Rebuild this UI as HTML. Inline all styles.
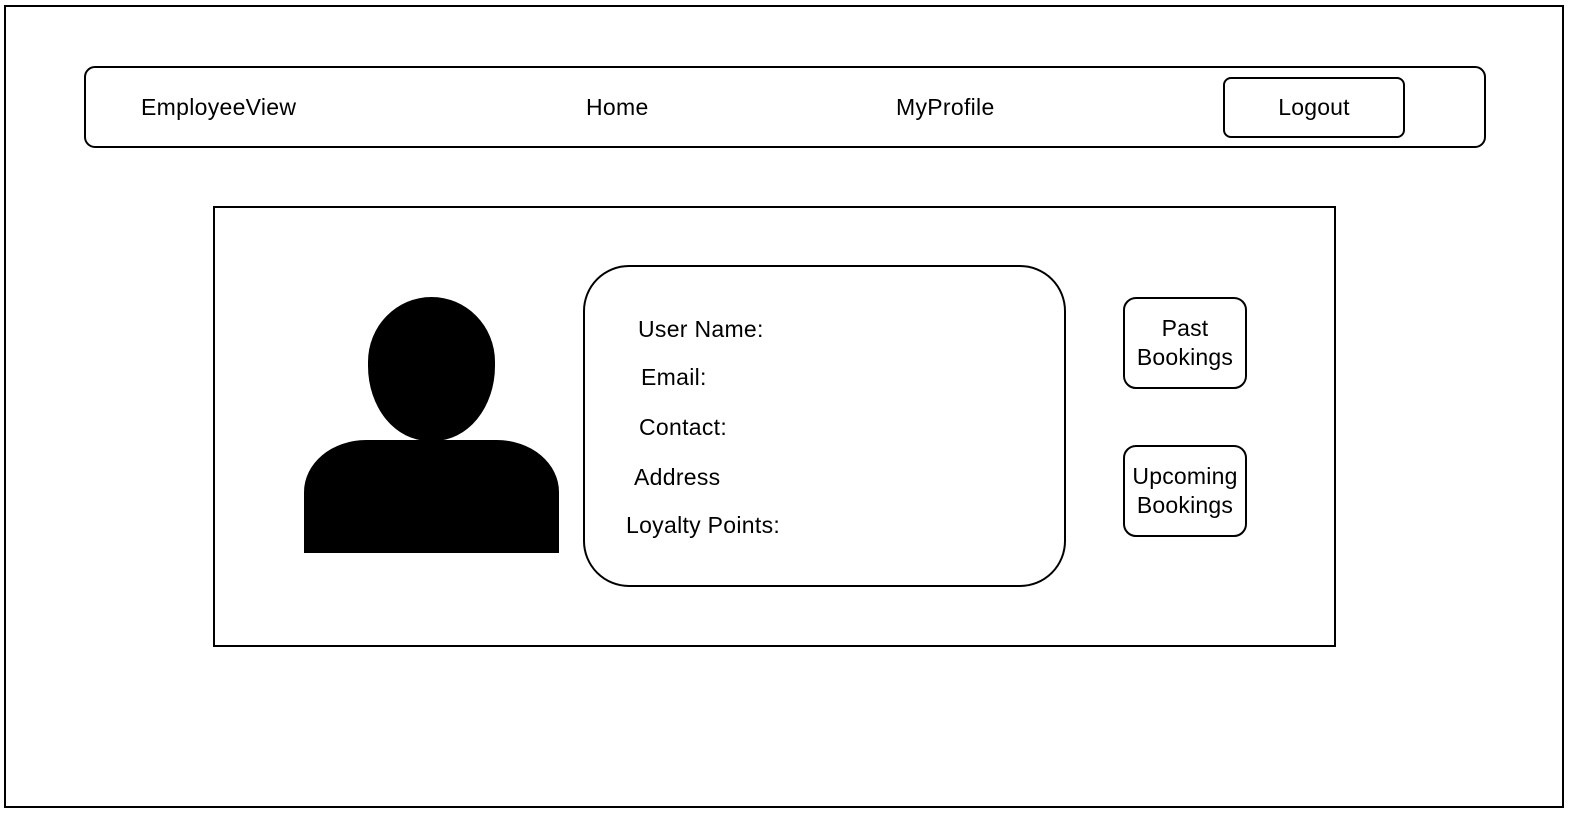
<!DOCTYPE html>
<html><head><meta charset="utf-8"><style>
*{margin:0;padding:0;box-sizing:border-box}
body{width:1570px;height:814px;background:#fff;position:relative;overflow:hidden;font-family:"Liberation Sans",Arial,sans-serif;color:#000}
.a{position:absolute}
.b{position:absolute;border:2px solid #000}
.t{position:absolute;font-size:23px;letter-spacing:0.3px;line-height:26px;white-space:nowrap}
.c{display:flex;align-items:center;justify-content:center;text-align:center;font-size:23px;letter-spacing:0.2px;line-height:29px}
</style></head><body>
<div class="b" style="left:4px;top:5px;width:1560px;height:803px"></div>
<div class="b" style="left:84px;top:66px;width:1402px;height:82px;border-radius:11px"></div>
<div class="t" style="left:141px;top:94px">EmployeeView</div>
<div class="t" style="left:586px;top:94px">Home</div>
<div class="t" style="left:896px;top:94px">MyProfile</div>
<div class="b c" style="left:1223px;top:77px;width:182px;height:61px;border-radius:8px">Logout</div>
<div class="b" style="left:213px;top:206px;width:1123px;height:441px"></div>
<div class="a" style="left:368px;top:297px;width:127px;height:144px;background:#000;border-radius:50% 50% 48% 48%/45% 45% 52% 52%"></div>
<div class="a" style="left:304px;top:440px;width:255px;height:113px;background:#000;border-radius:62px 62px 0 0/52px 52px 0 0"></div>
<div class="b" style="left:583px;top:265px;width:483px;height:322px;border-radius:46px"></div>
<div class="t" style="left:638px;top:316px">User Name:</div>
<div class="t" style="left:641px;top:364px">Email:</div>
<div class="t" style="left:639px;top:414px">Contact:</div>
<div class="t" style="left:634px;top:464px">Address</div>
<div class="t" style="left:626px;top:512px">Loyalty Points:</div>
<div class="b c" style="left:1123px;top:297px;width:124px;height:92px;border-radius:13px">Past<br>Bookings</div>
<div class="b c" style="left:1123px;top:445px;width:124px;height:92px;border-radius:13px">Upcoming<br>Bookings</div>
</body></html>
